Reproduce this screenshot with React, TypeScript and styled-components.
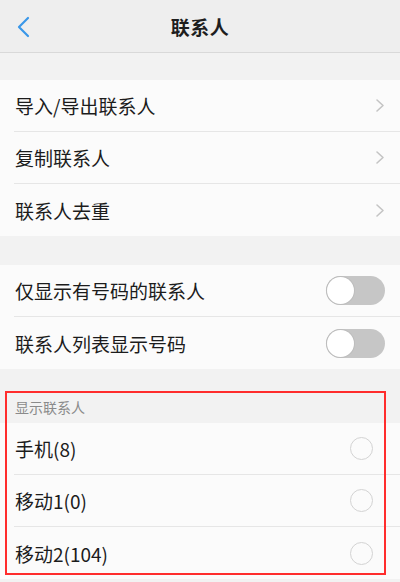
import React from 'react';
import styled, { createGlobalStyle } from 'styled-components';

const GlobalStyle = createGlobalStyle`
  html, body {
    margin: 0;
    padding: 0;
    background: #f2f2f2;
  }
  body {
    font-family: 'Noto Sans CJK SC', 'Noto Sans', 'Liberation Sans', sans-serif;
    color: #1c1c1c;
  }
`;

const linkRows = ['导入/导出联系人', '复制联系人', '联系人去重'];
const switchRows = ['仅显示有号码的联系人', '联系人列表显示号码'];
const accountRows = ['手机(8)', '移动1(0)', '移动2(104)'];

const App = () => {
  return (
    <Page>
      <GlobalStyle />
      <Header>
        <BackButton aria-label="back">
          <svg width="14" height="22" viewBox="0 0 14 22">
            <path
              d="M12 2 L3 11 L12 20"
              fill="none"
              stroke="#3a97e8"
              strokeWidth="2.2"
              strokeLinecap="round"
              strokeLinejoin="round"
            />
          </svg>
        </BackButton>
        <Title>联系人</Title>
      </Header>

      <Group $gap={27}>
        {linkRows.map((label) => (
          <Row key={label}>
            <RowLabel>{label}</RowLabel>
            <svg width="10" height="15" viewBox="0 0 10 15">
              <path
                d="M2 2 L8 7.5 L2 13"
                fill="none"
                stroke="#c4c4c4"
                strokeWidth="1.6"
                strokeLinecap="round"
                strokeLinejoin="round"
              />
            </svg>
          </Row>
        ))}
      </Group>

      <Group $gap={29}>
        {switchRows.map((label) => (
          <Row key={label}>
            <RowLabel>{label}</RowLabel>
            <Switch>
              <Knob />
            </Switch>
          </Row>
        ))}
      </Group>

      <Highlighted>
        <SectionLabel>显示联系人</SectionLabel>
        <List>
          {accountRows.map((label) => (
            <Row key={label}>
              <RowLabel>{label}</RowLabel>
              <Radio />
            </Row>
          ))}
        </List>
        <RedBox />
      </Highlighted>
    </Page>
  );
};

const Page = styled.div`
  width: 400px;
  height: 582px;
  overflow: hidden;
  background: #f2f2f2;
`;

const Header = styled.header`
  position: relative;
  height: 52px;
  display: flex;
  align-items: center;
  justify-content: center;
  background: #eeeeee;
  border-bottom: 1px solid #d9d9d9;
`;

const BackButton = styled.div`
  position: absolute;
  left: 16px;
  top: 16px;
  display: flex;
`;

const Title = styled.h1`
  margin: 0;
  font-size: 19px;
  font-weight: 700;
  color: #1e1e1e;
  letter-spacing: 0.5px;
`;

const Group = styled.section<{ $gap: number }>`
  margin-top: ${(p) => p.$gap}px;
  background: #fbfbfb;
`;

const List = styled.div`
  background: #fbfbfb;
`;

const Row = styled.div`
  height: 52px;
  margin-left: 14px;
  padding-right: 15px;
  display: flex;
  align-items: center;
  justify-content: space-between;
  border-bottom: 1px solid #e6e6e6;
  box-sizing: border-box;

  &:last-child {
    border-bottom: none;
  }
`;

const RowLabel = styled.span`
  font-size: 19px;
  line-height: 1;
  color: #1c1c1c;
  padding-left: 1px;
`;

const Switch = styled.div`
  width: 59px;
  height: 29px;
  border-radius: 15px;
  background: #c6c6c6;
  display: flex;
  align-items: center;
  padding: 1px;
  box-sizing: border-box;
`;

const Knob = styled.div`
  width: 27px;
  height: 27px;
  border-radius: 50%;
  background: #ffffff;
  box-shadow: 0 0 0 1px #bdbdbd;
`;

const Highlighted = styled.section`
  position: relative;
  margin-top: 22px;
`;

const SectionLabel = styled.div`
  height: 32px;
  padding-left: 15px;
  display: flex;
  align-items: center;
  font-size: 14px;
  color: #8a8a8a;
`;

const Radio = styled.div`
  width: 23px;
  height: 23px;
  margin-right: 12px;
  border-radius: 50%;
  border: 1.5px solid #d3d3d3;
  box-sizing: border-box;
`;

const RedBox = styled.div`
  position: absolute;
  left: 5px;
  top: 0;
  width: 381px;
  height: 184px;
  border: 2px solid #ff2d2d;
  box-sizing: border-box;
  pointer-events: none;
`;

export default App;
